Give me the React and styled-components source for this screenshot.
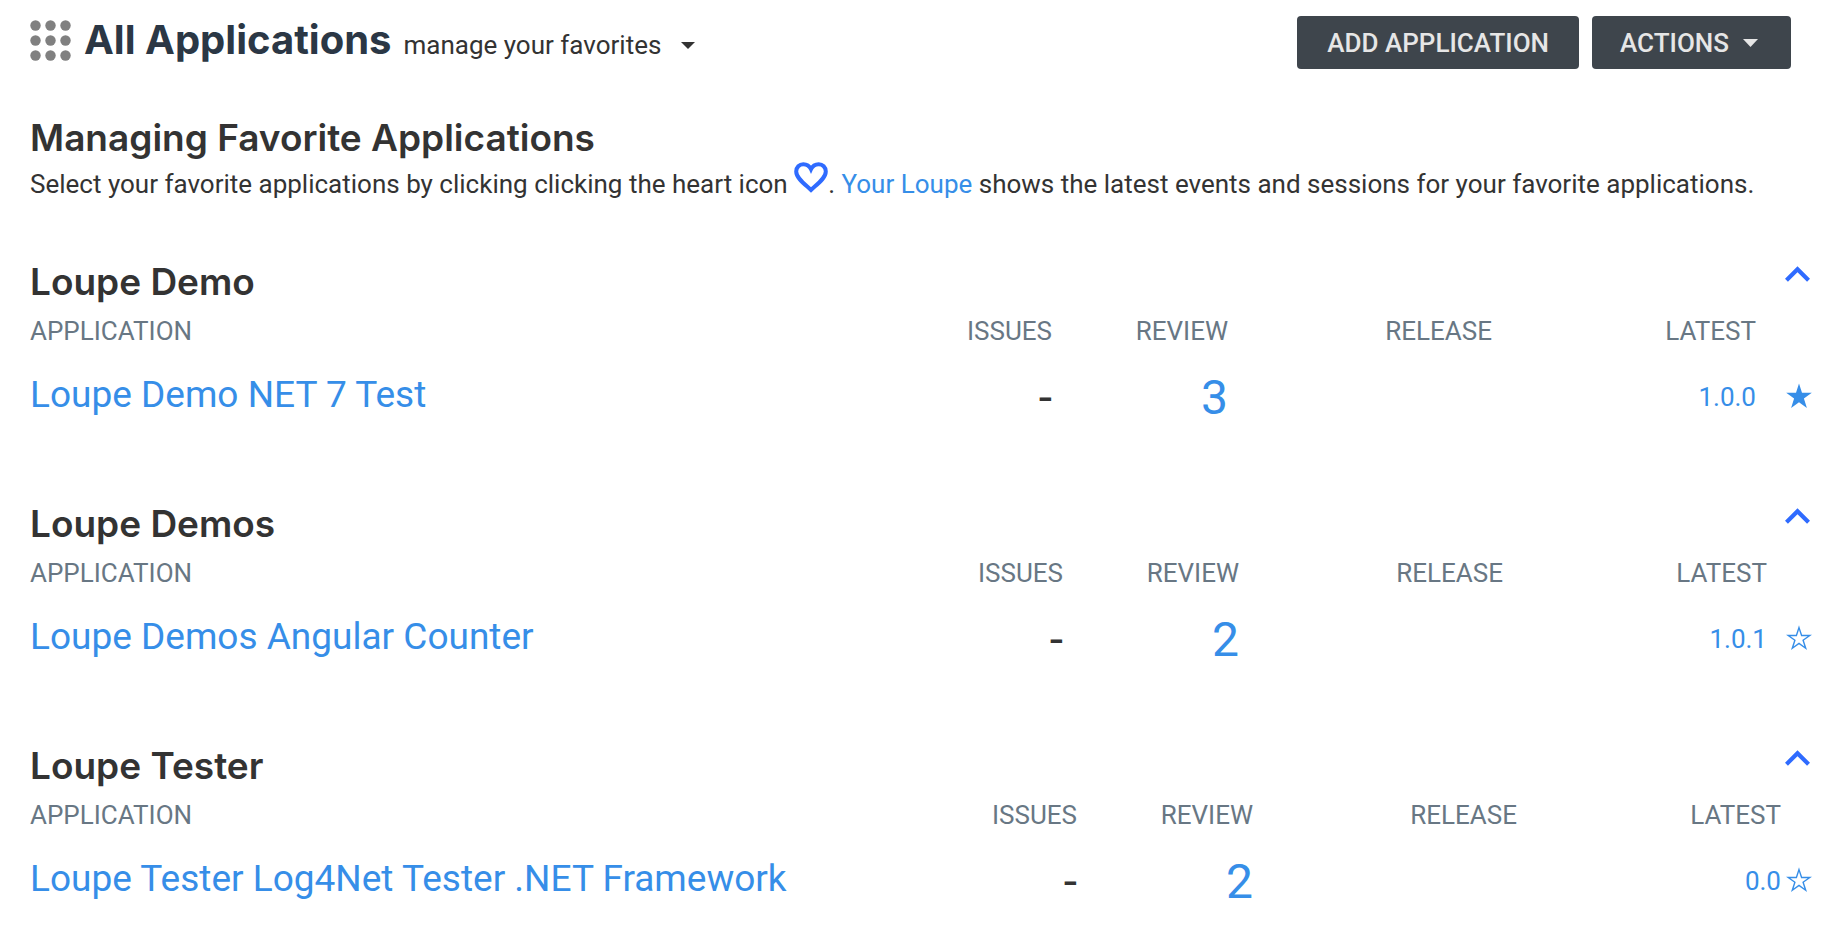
import React from "react";
import styled, { createGlobalStyle } from "styled-components";

const GlobalStyle = createGlobalStyle`
  * { box-sizing: border-box; }
  body {
    margin: 0;
    background: #fff;
    color: #333;
    font: 400 26px/32px Roboto, "Liberation Sans", sans-serif;
  }
  button {
    font: inherit;
    color: inherit;
    border: 0;
    padding: 0;
    background: none;
    cursor: pointer;
  }
`;

const Page = styled.div`
  padding: 14px 30px 0;
`;

const TopBar = styled.header`
  display: flex;
  align-items: flex-start;
  justify-content: space-between;
  padding-right: 21px;
`;

const TitleGroup = styled.div`
  display: flex;
  align-items: center;
  gap: 13px;
`;

const TitleText = styled.div`
  display: flex;
  align-items: baseline;
  gap: 12px;
`;

const PageTitle = styled.h1`
  margin: 0;
  font: 700 40px/52px Inter, sans-serif;
  color: #2b3745;
`;

const FilterButton = styled.button`
  display: flex;
  align-items: center;
  gap: 20px;
`;

const ButtonGroup = styled.div`
  display: flex;
  gap: 13px;
  padding-top: 2px;
`;

const ActionButton = styled.button`
  && {
    display: flex;
    align-items: center;
    gap: 14px;
    height: 53px;
    padding: 0 ${(p) => (p.$menu ? 33 : 30)}px 0 ${(p) => (p.$menu ? 28 : 30)}px;
    border-radius: 4px;
    background: #3e454c;
    color: #e6e6e6;
    font-weight: 500;
  }
`;

const Intro = styled.section`
  padding-top: 45px;
`;

const Heading = styled.h2`
  margin: 0;
  font: 600 37px/48px Inter, sans-serif;
`;

const IntroText = styled.p`
  margin: 0;
`;

const HeartIcon = styled.svg`
  width: 34px;
  height: 31px;
`;

const Link = styled.a`
  color: #368ee8;
  text-decoration: none;
`;

const Group = styled.section`
  padding-top: ${(p) => (p.$first ? 58 : 55)}px;
`;

const GroupHeader = styled.div`
  display: flex;
  justify-content: space-between;
  align-items: flex-start;
  padding: 0 2px 7px 0;
`;

const CollapseButton = styled.button`
  && { display: flex; padding-top: 8px; }
`;

const AppTable = styled.table`
  width: 100%;
  table-layout: fixed;
  border-collapse: collapse;
`;

const Col = styled.col`
  width: ${(p) => (p.$width ? p.$width + "px" : "auto")};
`;

const HeadCell = styled.th`
  padding: 0;
  height: 36px;
  font-weight: 400;
  color: #687784;
  text-align: ${(p) => (p.$left ? "left" : "right")};
`;

const Cell = styled.td`
  padding: 0;
  height: 96px;
  text-align: ${(p) => (p.$left ? "left" : "right")};
`;

const AppLink = styled(Link)`
  display: block;
  font-size: 37px;
  line-height: 44px;
  padding-bottom: 4px;
`;

const Count = styled.span`
  display: block;
  font-size: 48px;
  line-height: 56px;
  padding-top: 2px;
`;

const CountLink = styled(Count).attrs({ as: "a" })`
  color: #368ee8;
  text-decoration: none;
`;

const StarButton = styled.button`
  display: block;
  && { margin-left: auto; padding-bottom: 2px; }
`;

const StarIcon = styled.svg`
  display: block;
  width: 26px;
  height: 26px;
`;

function Caret({ width, height }) {
  return (
    <svg width={width} height={height} viewBox="0 0 14 7" preserveAspectRatio="none" aria-hidden="true">
      <path d="M0 0h14L7 7z" fill="currentColor" />
    </svg>
  );
}

function AppsIcon() {
  const centers = [5, 20, 35];
  return (
    <svg width="41" height="41" viewBox="0 0 41 41" fill="#808080" aria-hidden="true">
      {centers.map((y) =>
        centers.map((x) => <circle key={`${x}-${y}`} cx={x + 0.5} cy={y + 0.5} r="5.2" />)
      )}
    </svg>
  );
}

function Star({ filled }) {
  return (
    <StarIcon viewBox="0 0 26 26" aria-hidden="true">
      {filled ? (
        <path
          fill="#368ee8"
          d="M13 .5L16 9.800L25.800 9.800L17.900 15.600L20.900 24.900L13 19.200L5.100 24.900L8.100 15.600L.2 9.800L10 9.800z"
        />
      ) : (
        <path
          fill="none"
          stroke="#368ee8"
          strokeWidth="1.4"
          d="M13 2.600L15.600 10.500L23.800 10.500L17.100 15.300L19.700 23.200L13 18.350L6.300 23.200L8.900 15.300L2.200 10.500L10.400 10.500z"
        />
      )}
    </StarIcon>
  );
}

const groups = [
  { name: "Loupe Demo", app: "Loupe Demo NET 7 Test", review: 3, latest: "1.0.0", favorite: true, starWidth: 56 },
  { name: "Loupe Demos", app: "Loupe Demos Angular Counter", review: 2, latest: "1.0.1", favorite: false, starWidth: 45 },
  { name: "Loupe Tester", app: "Loupe Tester Log4Net Tester .NET Framework", review: 2, latest: "0.0", favorite: false, starWidth: 31 },
];

function ApplicationGroup({ group, first }) {
  return (
    <Group $first={first}>
      <GroupHeader>
        <Heading>{group.name}</Heading>
        <CollapseButton aria-label={`Collapse ${group.name}`}>
          <svg width="25" height="16" viewBox="6 8 12 7.410" fill="#2f6bff" aria-hidden="true">
            <path d="M12 8l-6 6 1.410 1.410L12 10.830l4.590 4.580L18 14z" />
          </svg>
        </CollapseButton>
      </GroupHeader>
      <AppTable>
        <colgroup>
          <Col />
          <Col $width={176} />
          <Col $width={176} />
          <Col $width={264} />
          <Col $width={264} />
          <Col $width={group.starWidth} />
        </colgroup>
        <thead>
          <tr>
            <HeadCell $left>APPLICATION</HeadCell>
            <HeadCell>ISSUES</HeadCell>
            <HeadCell>REVIEW</HeadCell>
            <HeadCell>RELEASE</HeadCell>
            <HeadCell>LATEST</HeadCell>
            <HeadCell as="td" />
          </tr>
        </thead>
        <tbody>
          <tr>
            <Cell $left><AppLink href="#app">{group.app}</AppLink></Cell>
            <Cell><Count>-</Count></Cell>
            <Cell><CountLink href="#review">{group.review}</CountLink></Cell>
            <Cell />
            <Cell><Link href="#latest">{group.latest}</Link></Cell>
            <Cell>
              <StarButton aria-label={`Favorite ${group.app}`} aria-pressed={group.favorite}>
                <Star filled={group.favorite} />
              </StarButton>
            </Cell>
          </tr>
        </tbody>
      </AppTable>
    </Group>
  );
}

export default function App() {
  return (
    <Page>
      <GlobalStyle />
      <TopBar>
        <TitleGroup>
          <AppsIcon />
          <TitleText>
            <PageTitle>All Applications</PageTitle>
            <FilterButton>
              manage your favorites
              <Caret width={14} height={7} />
            </FilterButton>
          </TitleText>
        </TitleGroup>
        <ButtonGroup>
          <ActionButton>ADD APPLICATION</ActionButton>
          <ActionButton $menu>
            ACTIONS
            <Caret width={15} height={8} />
          </ActionButton>
        </ButtonGroup>
      </TopBar>
      <main>
        <Intro>
          <Heading>Managing Favorite Applications</Heading>
          <IntroText>
            Select your favorite applications by clicking clicking the heart icon{" "}
            <HeartIcon viewBox="0 0 34 31" role="img" aria-label="heart">
              <path
                d="M17 28C10 21.500 2.200 16 2.200 9.500C2.200 5.200 5.400 2.200 9.300 2.200C12.500 2.200 15.500 4 17 7.200C18.500 4 21.500 2.200 24.700 2.200C28.600 2.200 31.800 5.200 31.800 9.500C31.800 16 24 21.500 17 28z"
                fill="none"
                stroke="#2f6bff"
                strokeWidth="4"
              />
            </HeartIcon>
            . <Link href="#loupe">Your Loupe</Link> shows the latest events and sessions for your favorite applications.
          </IntroText>
        </Intro>
        {groups.map((group, i) => (
          <ApplicationGroup key={group.name} group={group} first={i === 0} />
        ))}
      </main>
    </Page>
  );
}
